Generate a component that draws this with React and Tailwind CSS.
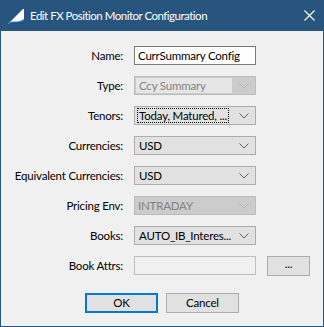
import { useState } from "react";

function Chevron({ disabled }) {
  return (
    <svg width="10" height="6" viewBox="0 0 10 6" className="shrink-0">
      <polyline
        points="0.5,0.5 5,5 9.5,0.5"
        fill="none"
        stroke={disabled ? "#b5b5b5" : "#606060"}
        strokeWidth="1"
      />
    </svg>
  );
}

function Combo({ value, disabled, focused, editable }) {
  if (disabled) {
    return (
      <div className="flex h-[19px] w-[122px] items-center border border-[#bcbcbc] bg-[#cccccc]">
        <div
          className={
            "flex h-full flex-1 items-center whitespace-nowrap pl-[3px] text-[#838383] " +
            (editable ? "border border-[#cccccc] bg-[#e6e6e6]" : "")
          }
        >
          {value}
        </div>
        <div className="flex w-[22px] items-center justify-center">
          <Chevron disabled />
        </div>
      </div>
    );
  }
  return (
    <div className="flex h-[19px] w-[122px] items-center border border-[#adadad] bg-[#e1e1e1]">
      <div className="flex h-full flex-1 items-center overflow-hidden whitespace-nowrap pl-[2px]">
        <span
          className={
            "px-px leading-[13px] " +
            (focused ? "border border-dotted border-black" : "border border-transparent")
          }
        >
          {value}
        </span>
      </div>
      <div className="flex w-[22px] shrink-0 items-center justify-center">
        <Chevron />
      </div>
    </div>
  );
}

function Row({ label, children }) {
  return (
    <div className="flex h-[19px] items-center">
      <div className="w-[123px] whitespace-nowrap pr-px text-right">{label}</div>
      <div className="ml-[10px] flex items-center">{children}</div>
    </div>
  );
}

export default function App() {
  const [name, setName] = useState("CurrSummary Config");

  return (
    <div
      className="flex h-[327px] w-[324px] flex-col border border-t-0 border-[#27557e] bg-[#f0f0f0] text-[11.5px] tracking-[-0.2px] text-black"
      style={{ fontFamily: 'Lato, "Noto Sans", sans-serif' }}
    >
      {/* title bar */}
      <div className="-mx-px flex h-[31px] items-center bg-[#27557e] pl-[8px] pr-[8px] text-white">
        <svg width="16" height="16" viewBox="0 0 16 16" className="shrink-0">
          <polygon points="0,16 15,1 16,1 16,16" fill="#ffffff" />
          <path d="M0,16 C4,11 8,16 16,11 L16,16 Z" fill="#2f7fc7" />
          <path d="M0,16 C5,13 9,16 16,13 L16,16 Z" fill="#1b4f86" />
        </svg>
        <span className="ml-[6px] text-[11.5px] tracking-[-0.5px]">
          Edit FX Position Monitor Configuration
        </span>
        <div className="ml-auto flex h-[14px] w-[14px] items-center justify-center">
          <svg width="11" height="11" viewBox="0 0 11 11">
            <path d="M0.5,0.5 L10.5,10.5 M10.5,0.5 L0.5,10.5" stroke="#fff" strokeWidth="1.1" />
          </svg>
        </div>
      </div>

      <div className="flex flex-col gap-[11px] pt-[15px]">
        <Row label="Name:">
          <input
            value={name}
            onChange={(e) => setName(e.target.value)}
            className="h-[19px] w-[122px] border border-[#7a7a7a] bg-white pl-[3px] outline-none"
          />
        </Row>
        <Row label="Type:">
          <Combo value="Ccy Summary" disabled editable />
        </Row>
        <Row label="Tenors:">
          <Combo value="Today, Matured, ..." focused />
        </Row>
        <Row label="Currencies:">
          <Combo value="USD" />
        </Row>
        <Row label="Equivalent Currencies:">
          <Combo value="USD" />
        </Row>
        <Row label="Pricing Env:">
          <Combo value="INTRADAY" disabled />
        </Row>
        <Row label="Books:">
          <Combo value="AUTO_IB_Interes..." />
        </Row>
        <Row label="Book Attrs:">
          <div className="h-[19px] w-[122px] border border-[#bfbfbf] bg-[#f0f0f0]" />
          <button className="ml-[11px] flex h-[20px] w-[43px] items-center justify-center border border-[#adadad] bg-[#e1e1e1] pb-[3px]">
            ...
          </button>
        </Row>
      </div>

      <div className="mt-[18px] flex justify-center gap-[8px]">
        <button className="flex h-[20px] w-[73px] items-center justify-center border-2 border-[#0078d7] bg-[#e1e1e1]">
          OK
        </button>
        <button className="flex h-[20px] w-[73px] items-center justify-center border border-[#adadad] bg-[#e1e1e1]">
          Cancel
        </button>
      </div>
    </div>
  );
}
